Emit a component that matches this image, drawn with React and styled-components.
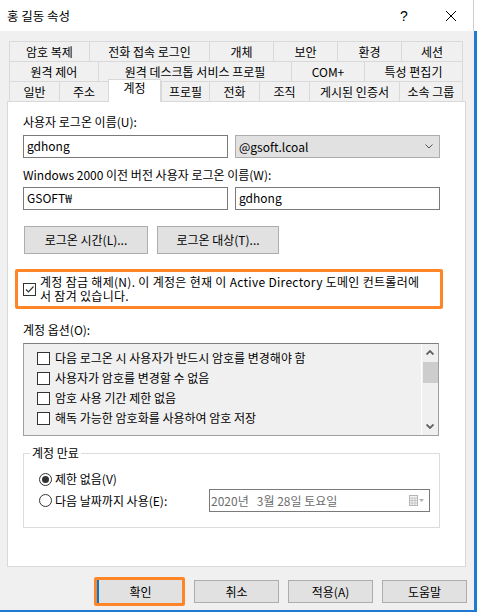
import React from "react";
import styled, {createGlobalStyle} from "styled-components";

const GlobalStyle = createGlobalStyle`
    * { box-sizing: border-box; }
    html, body {
        margin: 0;
        padding: 0;
        background: #ffffff;
    }
    body {
        font-family: "Noto Sans CJK KR", "Noto Sans", sans-serif;
        font-size: 12px;
        color: #000;
    }
`;

const Window = styled.div`
    width: 477px;
    height: 612px;
    display: flex;
    flex-direction: column;
`;

const TitleBar = styled.div`
    width: 474px;
    height: 31px;
    flex: none;
    display: flex;
    align-items: center;
    padding-left: 7px;
    background: #ffffff;
    border-right: 1px solid #cfcfcf;
`;

const Title = styled.div`
    font-size: 12.5px;
    line-height: 16px;
    flex: 1;
`;

const HelpMark = styled.div`
    width: 10px;
    font-family: "Liberation Sans", sans-serif;
    font-size: 14px;
    line-height: 16px;
    text-align: center;
    margin-right: 36px;
`;

const CloseBox = styled.div`
    width: 12px;
    height: 12px;
    margin-right: 16px;
    display: flex;
`;

const Body = styled.div`
    flex: 1;
    width: 477px;
    background: #f0f0f0;
    border-right: 3px solid #1f7bd0;
    border-bottom: 2px solid #1f7bd0;
    padding: 10px 7px 0 7px;
`;

const TabStrip = styled.div`
    margin-left: 2px;
    width: 454px;
`;

const TabRow = styled.div`
    display: flex;
    height: 20px;
`;

const Tab = styled.div`
    width: ${(p) => p.w}px;
    height: ${(p) => (p.active ? 23 : 20)}px;
    margin-top: ${(p) => (p.active ? -2 : 0)}px;
    flex: none;
    position: relative;
    z-index: ${(p) => (p.active ? 2 : 0)};
    background: ${(p) => (p.active ? "#ffffff" : "#f0f0f0")};
    border-top: 1px solid #d9d9d9;
    border-left: 1px solid #d9d9d9;
    border-right: ${(p) => (p.active ? "1px solid #d9d9d9" : "none")};
    text-align: center;
    line-height: ${(p) => (p.active ? 16 : 19)}px;
    white-space: nowrap;

    &:last-child {
        border-right: 1px solid #d9d9d9;
    }
`;

const Panel = styled.div`
    position: relative;
    z-index: 1;
    width: 459px;
    height: 466px;
    background: #ffffff;
    border: 1px solid #d9d9d9;
    padding: 12px 0 0 15px;
`;

const Label = styled.div`
    height: 16px;
    line-height: 16px;
    white-space: nowrap;
    margin-top: ${(p) => p.mt || 0}px;
`;

const FieldRow = styled.div`
    display: flex;
    gap: 7px;
    margin-top: ${(p) => p.mt || 0}px;
`;

const TextBox = styled.div`
    width: 205px;
    height: 23px;
    border: 1px solid #7a7a7a;
    background: #ffffff;
    padding-left: 3px;
    line-height: 20px;
    white-space: nowrap;
`;

const ComboBox = styled.div`
    width: 205px;
    height: 23px;
    border: 1px solid #adadad;
    background: #e1e1e1;
    padding: 0 6px 0 3px;
    display: flex;
    align-items: center;
    justify-content: space-between;
    line-height: 20px;
`;

const ButtonRow = styled.div`
    display: flex;
    gap: 9px;
    padding-left: 1px;
    margin-top: ${(p) => p.mt || 0}px;
`;

const PushButton = styled.div`
    width: ${(p) => p.w}px;
    height: ${(p) => p.h || 23}px;
    background: #e1e1e1;
    border: 1px solid #adadad;
    display: flex;
    align-items: center;
    justify-content: center;
    white-space: nowrap;
    line-height: 16px;
`;

const DefaultButton = styled(PushButton)`
    border: none;
    border-left: 2px solid #0078d7;
`;

const Highlight = styled.div`
    border: 3px solid #ff8526;
    border-radius: 2px;
`;

const UnlockBox = styled(Highlight)`
    margin-top: 15px;
    margin-left: -8px;
    width: 428px;
    height: 40px;
    display: flex;
    align-items: center;
    gap: 4px;
    padding-left: 5px;
`;

const CheckSquare = styled.div`
    width: 13px;
    height: 13px;
    flex: none;
    border: 1px solid #333333;
    background: #ffffff;
    display: flex;
`;

const UnlockText = styled.div`
    margin-top: -1px;
    letter-spacing: 0.3px;
`;

const UnlockLine = styled.div`
    height: 14px;
    line-height: 14px;
    white-space: nowrap;
`;

const ListBox = styled.div`
    margin-top: 5px;
    width: 416px;
    height: 93px;
    border: 1px solid #a0a0a0;
    border-top-color: #7f7f7f;
    background: #f0f0f0;
    display: flex;
`;

const ListItems = styled.div`
    flex: 1;
    padding: 4px 0 0 13px;
`;

const ListItem = styled.div`
    height: 20px;
    display: flex;
    align-items: center;
    gap: 5px;
    white-space: nowrap;
    line-height: 16px;
`;

const ScrollBar = styled.div`
    width: 17px;
    flex: none;
    border-left: 1px solid #ffffff;
    display: flex;
    flex-direction: column;
    align-items: center;
`;

const ScrollArrow = styled.div`
    height: 17px;
    width: 15px;
    display: flex;
    align-items: center;
    justify-content: center;
`;

const ScrollThumb = styled.div`
    width: 15px;
    height: 21px;
    margin-top: 1px;
    background: #cdcdcd;
`;

const ScrollTrack = styled.div`
    flex: 1;
`;

const GroupBox = styled.fieldset`
    margin: 9px 0 0 0;
    width: 417px;
    border: 1px solid #dcdcdc;
    padding: 0 9px 15px 15px;
    min-width: 0;
`;

const GroupTitle = styled.legend`
    margin-left: -9px;
    padding: 0 2px;
    line-height: 16px;
    height: 16px;
`;

const RadioRow = styled.div`
    display: flex;
    align-items: center;
    height: ${(p) => p.h}px;
    margin-top: ${(p) => p.mt || 0}px;
    white-space: nowrap;
    line-height: 16px;
`;

const RadioCircle = styled.div`
    width: 13px;
    height: 13px;
    flex: none;
    border-radius: 50%;
    border: 1px solid #333333;
    background: #ffffff;
    margin-right: 3px;
    display: flex;
    align-items: center;
    justify-content: center;

    &::after {
        content: "";
        display: ${(p) => (p.checked ? "block" : "none")};
        width: 7px;
        height: 7px;
        border-radius: 50%;
        background: #333333;
    }
`;

const DatePicker = styled.div`
    margin-left: auto;
    width: 221px;
    height: 23px;
    border: 1px solid #7a7a7a;
    background: #ffffff;
    display: flex;
    align-items: center;
    padding: 0 5px 0 1px;
    color: #6d6d6d;
    white-space: pre;
    line-height: 16px;
`;

const DateText = styled.span`
    flex: 1;
`;

const Footer = styled.div`
    margin-top: 10px;
    display: flex;
    justify-content: flex-end;
    align-items: center;
    gap: 9px;
`;

const CloseIcon = () => (
    <svg width="12" height="12" viewBox="0 0 12 12">
        <path d="M1 1 L11 11 M11 1 L1 11" stroke="#000" strokeWidth="1" fill="none"/>
    </svg>
);

const CheckMark = () => (
    <svg width="11" height="11" viewBox="0 0 11 11">
        <polyline points="2,5.5 4.5,8 9.5,2.5" stroke="#333" strokeWidth="1.2" fill="none"/>
    </svg>
);

const Chevron = ({up, bold}) => (
    <svg width="8" height="5" viewBox="0 0 8 5">
        <polyline
            points={up ? "0.5,4.5 4,1 7.5,4.5" : "0.5,0.5 4,4 7.5,0.5"}
            stroke={bold ? "#606060" : "#555"}
            strokeWidth={bold ? 1.8 : 1}
            fill="none"
        />
    </svg>
);

const CalendarIcon = () => (
    <svg width="15" height="11" viewBox="0 0 15 11">
        <rect x="0.5" y="0.5" width="8" height="10" fill="#f4f4f4" stroke="#b5b5b5"/>
        <path d="M0.5 3 H8.5 M0.5 5.5 H8.5 M0.5 8 H8.5 M3 3 V10.5 M6 3 V10.5" stroke="#c4c4c4" strokeWidth="1"/>
        <polygon points="10,4 15,4 12.5,7" fill="#b0b0b0"/>
    </svg>
);

const topTabs = [
    ["암호 복제", 80],
    ["전화 접속 로그인", 120],
    ["개체", 64],
    ["보안", 64],
    ["환경", 64],
    ["세션", 62],
];

const midTabs = [
    ["원격 제어", 89],
    ["원격 데스크톱 서비스 프로필", 193],
    ["COM+", 73],
    ["특성 편집기", 99],
];

const frontTabs = [
    ["일반", 50],
    ["주소", 49],
    ["계정", 53, true],
    ["프로필", 48],
    ["전화", 50],
    ["조직", 50],
    ["게시된 인증서", 90],
    ["소속 그룹", 64],
];

const accountOptions = [
    "다음 로그온 시 사용자가 반드시 암호를 변경해야 함",
    "사용자가 암호를 변경할 수 없음",
    "암호 사용 기간 제한 없음",
    "해독 가능한 암호화를 사용하여 암호 저장",
];

function TabLine({tabs}) {
    return (
        <TabRow>
            {tabs.map(([name, w, active]) => (
                <Tab key={name} w={w} active={active}>{name}</Tab>
            ))}
        </TabRow>
    );
}

export default function App() {
    return (
        <>
            <GlobalStyle/>
            <Window>
                <TitleBar>
                    <Title>홍 길동 속성</Title>
                    <HelpMark>?</HelpMark>
                    <CloseBox><CloseIcon/></CloseBox>
                </TitleBar>

                <Body>
                    <TabStrip>
                        <TabLine tabs={topTabs}/>
                        <TabLine tabs={midTabs}/>
                        <TabLine tabs={frontTabs}/>
                    </TabStrip>

                    <Panel>
                        <Label>사용자 로그온 이름(U):</Label>
                        <FieldRow mt={5}>
                            <TextBox>gdhong</TextBox>
                            <ComboBox>
                                <span>@gsoft.lcoal</span>
                                <Chevron/>
                            </ComboBox>
                        </FieldRow>

                        <Label mt={9}>Windows 2000 이전 버전 사용자 로그온 이름(W):</Label>
                        <FieldRow mt={4}>
                            <TextBox>GSOFT₩</TextBox>
                            <TextBox>gdhong</TextBox>
                        </FieldRow>

                        <ButtonRow mt={16}>
                            <PushButton w={124} h={28}>로그온 시간(L)...</PushButton>
                            <PushButton w={122} h={28}>로그온 대상(T)...</PushButton>
                        </ButtonRow>

                        <UnlockBox>
                            <CheckSquare><CheckMark/></CheckSquare>
                            <UnlockText>
                                <UnlockLine>계정 잠금 해제(N). 이 계정은 현재 이 Active Directory 도메인 컨트롤러에</UnlockLine>
                                <UnlockLine>서 잠겨 있습니다.</UnlockLine>
                            </UnlockText>
                        </UnlockBox>

                        <Label mt={13}>계정 옵션(O):</Label>
                        <ListBox>
                            <ListItems>
                                {accountOptions.map((opt) => (
                                    <ListItem key={opt}>
                                        <CheckSquare/>
                                        {opt}
                                    </ListItem>
                                ))}
                            </ListItems>
                            <ScrollBar>
                                <ScrollArrow><Chevron up bold/></ScrollArrow>
                                <ScrollThumb/>
                                <ScrollTrack/>
                                <ScrollArrow><Chevron bold/></ScrollArrow>
                            </ScrollBar>
                        </ListBox>

                        <GroupBox>
                            <GroupTitle>계정 만료</GroupTitle>
                            <RadioRow h={20} mt={8}>
                                <RadioCircle checked/>
                                제한 없음(V)
                            </RadioRow>
                            <RadioRow h={23}>
                                <RadioCircle/>
                                다음 날짜까지 사용(E):
                                <DatePicker>
                                    <DateText>2020년   3월 28일 토요일</DateText>
                                    <CalendarIcon/>
                                </DatePicker>
                            </RadioRow>
                        </GroupBox>
                    </Panel>

                    <Footer>
                        <Highlight>
                            <DefaultButton w={85}>확인</DefaultButton>
                        </Highlight>
                        <PushButton w={85}>취소</PushButton>
                        <PushButton w={85}>적용(A)</PushButton>
                        <PushButton w={85}>도움말</PushButton>
                    </Footer>
                </Body>
            </Window>
        </>
    );
}
